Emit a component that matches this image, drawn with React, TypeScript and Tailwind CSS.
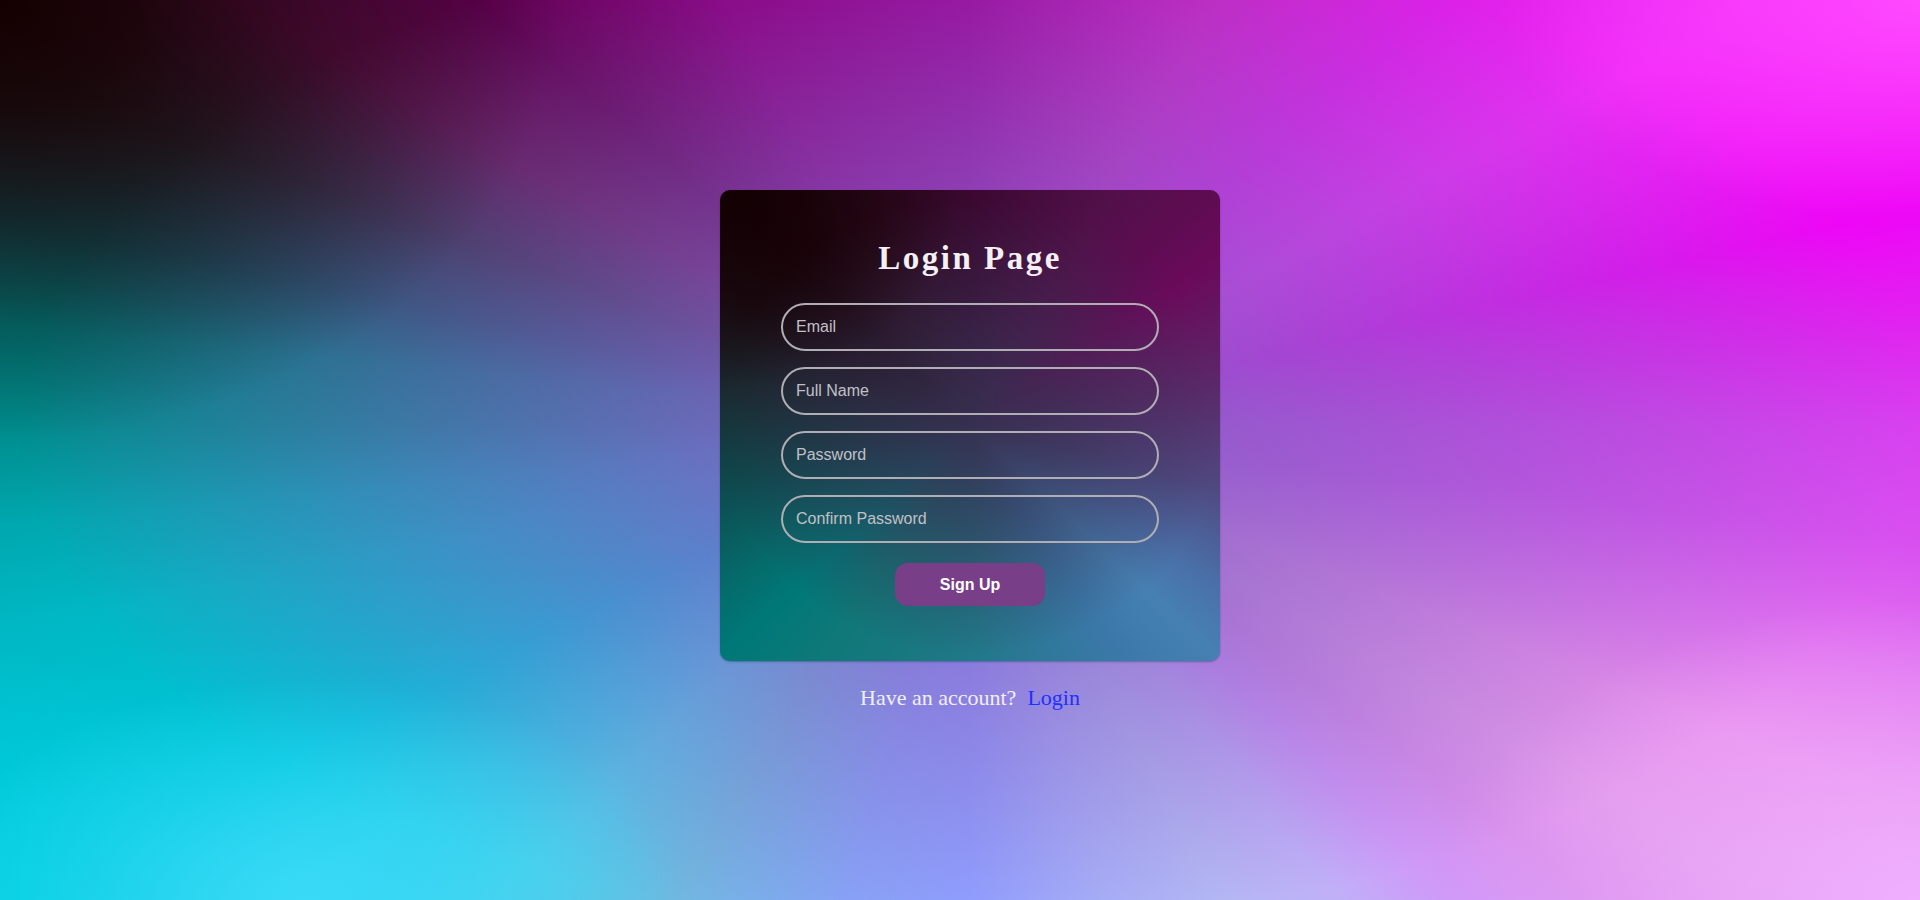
import React from "react";

export default function App() {
  return (
    <div className="min-h-screen w-full flex items-center justify-center pl-[20px] bg-[#8a60c0] bg-[image:radial-gradient(ellipse_560px_440px_at_0%_0%,#140000_0%,#140000d0_25%,#14000070_55%,#14000000_100%),radial-gradient(ellipse_420px_220px_at_100%_0%,#ff48ff_0%,#ff48ff00_100%),radial-gradient(ellipse_480px_300px_at_100%_100%,#f0b0ff_0%,#f0b0ff00_100%),radial-gradient(ellipse_380px_220px_at_16%_100%,#38daf8_0%,#38daf800_100%),radial-gradient(ellipse_300px_250px_at_0%_100%,#00d0e0_0%,#00d0e000_100%),radial-gradient(ellipse_950px_500px_at_50.5%_47.3%,#8660c4_0%,#8660c4d0_25%,#8660c480_55%,#8660c400_100%),conic-gradient(from_0deg_at_50.5%_47.3%,#9a0c9c_0deg,#c428c4_30deg,#dc20e8_48deg,#f028f8_62deg,#f018f8_70deg,#ee06f6_77deg,#e024f0_84deg,#d840f0_90deg,#d850f0_97deg,#e070f0_104deg,#e890ec_112deg,#e098ea_120deg,#d890ec_127deg,#d098f8_134deg,#c0b0f8_142deg,#b4b8f4_152deg,#a8b0f8_164deg,#90a0ff_180deg,#88a4f8_194deg,#70b8e0_212deg,#50cce8_225deg,#28cce6_235deg,#00c8dc_244deg,#00b8c4_258deg,#00a8b0_264deg,#008c8c_270deg,#007a7a_276deg,#105058_282deg,#2a2c3a_290deg,#5a1048_300deg,#600050_311deg,#8a0080_330deg,#9a0c9c_360deg)]">
      <div className="flex flex-col items-center">
        <div className="w-[500px] rounded-[10px] pt-[50px] pb-[55px] flex flex-col items-center bg-[#2e2c46] bg-[image:radial-gradient(ellipse_240px_200px_at_0%_0%,#120002_0%,#12000200_100%),radial-gradient(ellipse_250px_230px_at_50%_50%,#363050_0%,#363050a0_40%,#36305000_100%),conic-gradient(from_0deg_at_50%_50%,#3a0830_0deg,#52104a_32deg,#5e0c52_46deg,#6a0a5a_56deg,#5a2a6a_82deg,#504880_104deg,#4a70a8_123deg,#4680b2_133deg,#3a78a8_148deg,#207888_180deg,#107878_212deg,#007878_227deg,#066a6a_237deg,#0e4a4e_256deg,#1a2a30_278deg,#1c1018_298deg,#1e0610_313deg,#280818_328deg,#3a0830_360deg)] shadow-[0_1px_2px_rgba(0,40,60,0.35)]">
          <h1 className="font-['Liberation_Serif',serif] font-bold text-[33px] leading-[36px] tracking-[2.5px] text-[#f4f0f4]">
            Login Page
          </h1>
          <div className="mt-[27px] flex flex-col gap-[16px] w-[378px]">
            {["Email", "Full Name", "Password", "Confirm Password"].map((p) => (
              <input
                key={p}
                type={p.includes("Password") ? "password" : "text"}
                placeholder={p}
                className="h-[48px] w-full rounded-full border-2 border-[#b0aeb4] bg-transparent px-[13px] font-['Liberation_Sans',sans-serif] text-[16px] text-white outline-none placeholder:text-[#c2c0c6]"
              />
            ))}
          </div>
          <button className="mt-[20px] w-[150px] h-[43px] rounded-[13px] bg-[#783e88] font-['Liberation_Sans',sans-serif] font-bold text-[16px] text-white">
            Sign Up
          </button>
        </div>
        <p className="mt-[24px] font-['Liberation_Serif',serif] text-[22px] leading-[25px] text-[#f2eef8]">
          Have an account?{"\u00a0 "}
          <a href="#" className="text-[#2030ff]">Login</a>
        </p>
      </div>
    </div>
  );
}
